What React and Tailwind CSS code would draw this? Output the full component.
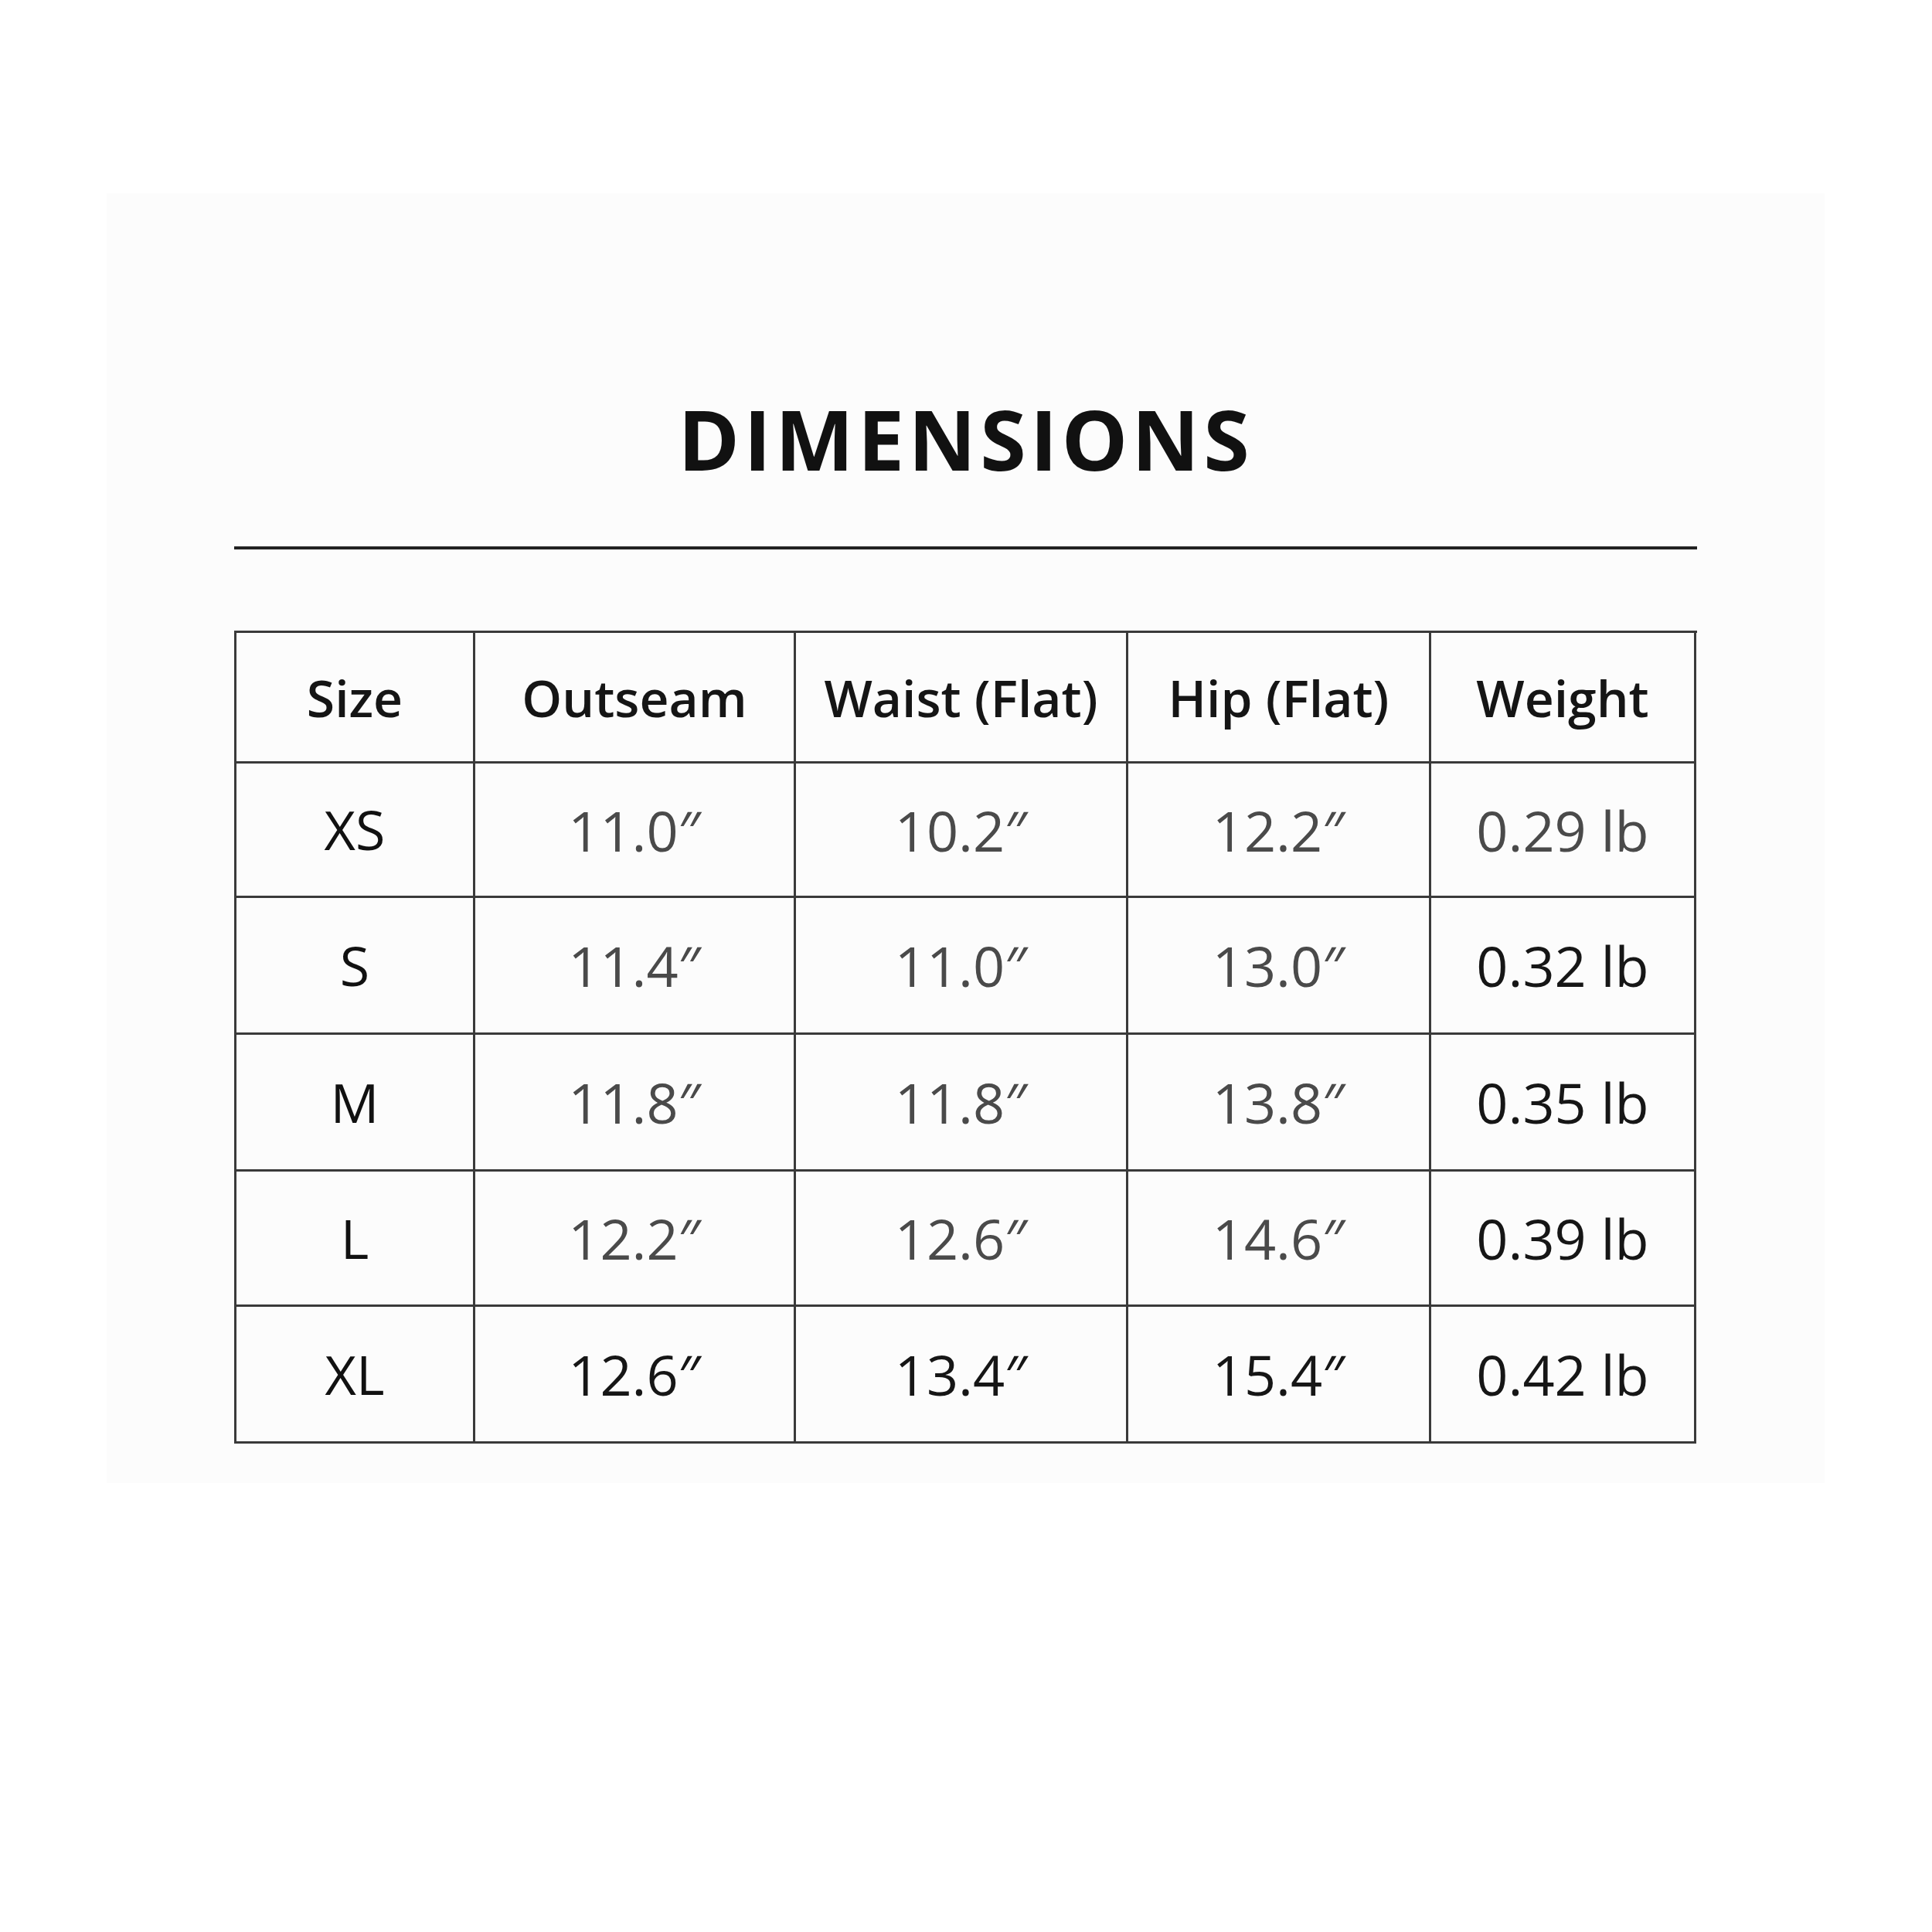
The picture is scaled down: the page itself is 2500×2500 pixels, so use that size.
import React from 'react'

const cols = ['Size', 'Outseam', 'Waist (Flat)', 'Hip (Flat)', 'Weight']

const rows = [
  { size: 'XS', vals: ['11.0″', '10.2″', '12.2″', '0.29 lb'], strong: [false, false, false, false], h: 'h-[174px]' },
  { size: 'S', vals: ['11.4″', '11.0″', '13.0″', '0.32 lb'], strong: [false, false, false, true], h: 'h-[177px]' },
  { size: 'M', vals: ['11.8″', '11.8″', '13.8″', '0.35 lb'], strong: [false, false, false, true], h: 'h-[177px]' },
  { size: 'L', vals: ['12.2″', '12.6″', '14.6″', '0.39 lb'], strong: [false, false, false, true], h: 'h-[175px]' },
  { size: 'XL', vals: ['12.6″', '13.4″', '15.4″', '0.42 lb'], strong: [true, true, true, true], h: 'h-[177px]' },
]

const widths = ['w-[309px]', 'w-[415px]', 'w-[430px]', 'w-[392px]', 'w-[343px]']

function Cell({ w, h, children }) {
  return (
    <div className={`${w} ${h} shrink-0 flex items-center justify-center border-r-[3px] border-b-[3px] border-[#3a3a3a]`}>
      {children}
    </div>
  )
}

export default function App() {
  return (
    <div className="w-[2500px] h-[2500px] bg-white pt-[250px] pl-[138px] font-['Open_Sans',sans-serif]">
      <div className="w-[2223px] h-[1669px] bg-[#fcfcfc] px-[165px] pt-[264px] flex flex-col">
        <h1 className="text-center text-[108px] leading-none font-bold tracking-[5px] text-[#111]">
          DIMENSIONS
        </h1>
        <div className="mt-[85px] h-[4px] bg-[#222]" />

        <div className="mt-[105px] border-l-[3px] border-t-[3px] border-[#3a3a3a]">
          {/* header */}
          <div className="flex">
            {cols.map((c, i) => (
              <Cell key={c} w={widths[i]} h="h-[169px]">
                <span className="text-[66px] font-semibold text-[#151515]">{c}</span>
              </Cell>
            ))}
          </div>

          {rows.map((r) => (
            <div key={r.size} className="flex">
              <Cell w={widths[0]} h={r.h}>
                <span className="text-[70px] font-medium text-[#111]">{r.size}</span>
              </Cell>
              {r.vals.map((v, i) => (
                <Cell key={i} w={widths[i + 1]} h={r.h}>
                  <span
                    className={
                      r.strong[i]
                        ? 'text-[72px] font-normal text-[#161616]'
                        : 'text-[72px] font-normal text-[#4a4a4a]'
                    }
                  >
                    {v}
                  </span>
                </Cell>
              ))}
            </div>
          ))}
        </div>
      </div>
    </div>
  )
}
